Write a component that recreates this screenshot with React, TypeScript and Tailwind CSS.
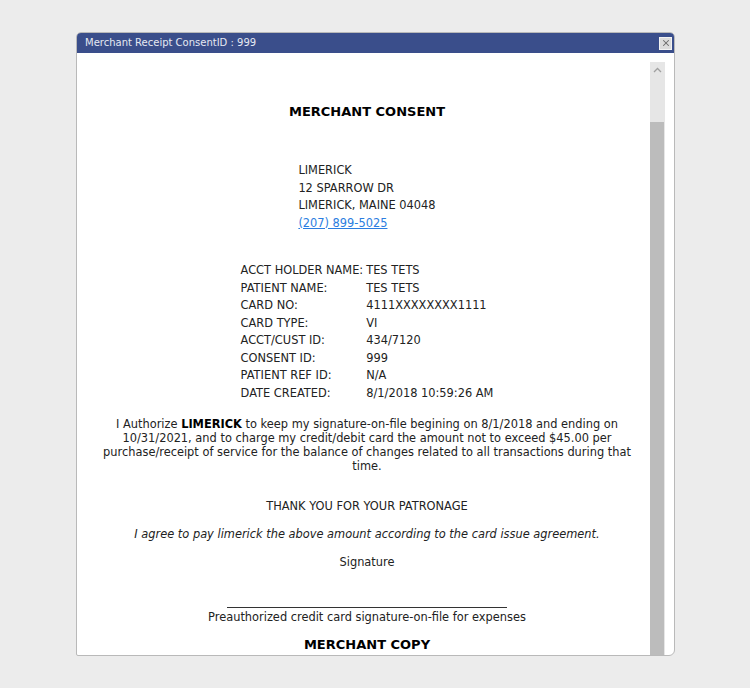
import { X } from 'lucide-react'

const ROWS: [string, string][] = [
  ['ACCT HOLDER NAME:', 'TES TETS'],
  ['PATIENT NAME:', 'TES TETS'],
  ['CARD NO:', '4111XXXXXXXX1111'],
  ['CARD TYPE:', 'VI'],
  ['ACCT/CUST ID:', '434/7120'],
  ['CONSENT ID:', '999'],
  ['PATIENT REF ID:', 'N/A'],
  ['DATE CREATED:', '8/1/2018 10:59:26 AM'],
]

const font = { fontFamily: '"DejaVu Sans", Verdana, sans-serif' }

export default function App() {
  return (
    <div className="min-h-screen w-full bg-[#ececec] pt-[32px] pl-[76px]" style={font}>
      {/* ── 다이얼로그 ── */}
      <div className="w-[599px] h-[624px] flex flex-col overflow-hidden rounded-t-[5px] rounded-br-[6px] rounded-bl-[2px] border border-[#b9b9b9] bg-white">
        <div className="h-[20px] shrink-0 flex items-center justify-between bg-[#3a4e8b] pl-[8px] pr-[2px]">
          <span className="text-[10px] text-[#e6e9f2] leading-none">Merchant Receipt ConsentID : 999</span>
          <button className="w-[13px] h-[13px] flex items-center justify-center bg-[#dcdcdc] border border-[#f2f2f2]">
            <X size={10} strokeWidth={2.5} color="#6b6b6b" />
          </button>
        </div>

        <div className="flex-1 flex min-h-0">
          {/* 본문 */}
          <div className="flex-1 overflow-hidden pl-[7px] text-[#222] text-[11.4px]">
            <div className="flex flex-col items-center pt-[51px]">
              <div className="text-[13px] leading-[16px] font-bold text-black">MERCHANT CONSENT</div>

              <div className="mt-[42px] leading-[17.5px]">
                <div>LIMERICK</div>
                <div>12 SPARROW DR</div>
                <div>LIMERICK, MAINE 04048</div>
                <a href="#" className="text-[#2b7de0] underline">(207) 899-5025</a>
              </div>

              <div className="mt-[30px] grid grid-cols-[auto_auto] gap-x-[3px] leading-[17.5px]">
                {ROWS.map(([k, v]) => (
                  <div key={k} className="contents">
                    <span>{k}</span>
                    <span>{v}</span>
                  </div>
                ))}
              </div>

              <p className="mt-[15px] w-[540px] text-center leading-[14px]">
                I Authorize <b className="text-black">LIMERICK</b> to keep my signature-on-file begining on 8/1/2018 and ending on
                10/31/2021, and to charge my credit/debit card the amount not to exceed $45.00 per purchase/receipt of service
                for the balance of changes related to all transactions during that time.
              </p>

              <div className="mt-[26px] leading-[14px]">THANK YOU FOR YOUR PATRONAGE</div>
              <div className="mt-[14px] leading-[14px] italic">I agree to pay limerick the above amount according to the card issue agreement.</div>
              <div className="mt-[14px] leading-[14px]">Signature</div>

              <div className="mt-[38px] w-[280px] h-px bg-[#333]" />
              <div className="mt-[2px] leading-[14px]">Preauthorized credit card signature-on-file for expenses</div>

              <div className="mt-[13px] text-[13px] leading-[16px] font-bold text-black">MERCHANT COPY</div>
              <div className="mt-[20px] leading-[14px]">&nbsp;</div>
            </div>
          </div>

          {/* 스크롤바 */}
          <div className="w-[15px] mt-[9px] mr-[9px] flex flex-col bg-[#e6e6e6]">
            <div className="h-[16px] flex items-center justify-center">
              <svg width="9" height="6" viewBox="0 0 9 6" fill="none" stroke="#a0a0a0" strokeWidth="1.3">
                <path d="M1 5 L4.5 1.5 L8 5" />
              </svg>
            </div>
            <div className="h-[44px]" />
            <div className="flex-1 bg-[#bcbcbc] mr-[1px]" />
          </div>
        </div>
      </div>
    </div>
  )
}
